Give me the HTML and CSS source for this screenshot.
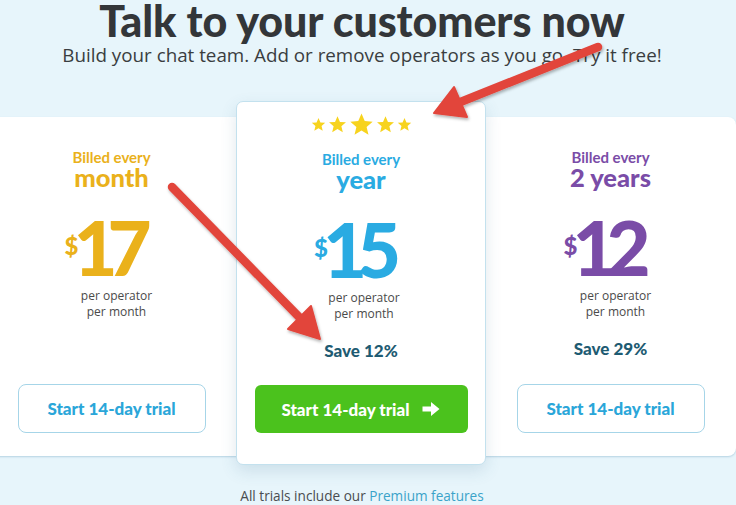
FILE: index.html
```html
<!DOCTYPE html>
<html lang="en">
<head>
    <meta charset="UTF-8">
    <meta name="viewport" content="width=device-width, initial-scale=1.0">
    <title>Pricing</title>
    <link rel="stylesheet" href="styles.css">
</head>
<body>
    <div class="page">
        <h1 class="title">Talk to your customers now</h1>
        <p class="subtitle">Build your chat team. Add or remove operators as you go. Try it free!</p>

        <div class="plans">
            <div class="plan plan-month">
                <div class="billed">Billed every</div>
                <div class="period">month</div>
                <div class="price"><span class="currency">$</span><span class="amount">17</span></div>
                <div class="per">per operator<br>per month</div>
                <button class="trial">Start 14-day trial</button>
            </div>

            <div class="plan plan-year">
                <div class="stars">
                    <svg class="star s1" viewBox="0 0 24 24"><path d="M12 1.5l3.1 7.2 7.6.6-5.8 5 1.8 7.5L12 17.8l-6.7 4 1.8-7.5-5.8-5 7.6-.6z"/></svg>
                    <svg class="star s2" viewBox="0 0 24 24"><path d="M12 1.5l3.1 7.2 7.6.6-5.8 5 1.8 7.5L12 17.8l-6.7 4 1.8-7.5-5.8-5 7.6-.6z"/></svg>
                    <svg class="star s3" viewBox="0 0 24 24"><path d="M12 1.5l3.1 7.2 7.6.6-5.8 5 1.8 7.5L12 17.8l-6.7 4 1.8-7.5-5.8-5 7.6-.6z"/></svg>
                    <svg class="star s2" viewBox="0 0 24 24"><path d="M12 1.5l3.1 7.2 7.6.6-5.8 5 1.8 7.5L12 17.8l-6.7 4 1.8-7.5-5.8-5 7.6-.6z"/></svg>
                    <svg class="star s1" viewBox="0 0 24 24"><path d="M12 1.5l3.1 7.2 7.6.6-5.8 5 1.8 7.5L12 17.8l-6.7 4 1.8-7.5-5.8-5 7.6-.6z"/></svg>
                </div>
                <div class="billed">Billed every</div>
                <div class="period">year</div>
                <div class="price"><span class="currency">$</span><span class="amount">15</span></div>
                <div class="per">per operator<br>per month</div>
                <div class="save">Save 12%</div>
                <button class="trial trial-main">Start 14-day trial
                    <svg class="arrow-icon" viewBox="0 0 20 16"><path d="M1.5 5.5h8.5V1l8.5 7-8.5 7v-4.5H1.5z"/></svg>
                </button>
            </div>

            <div class="plan plan-2years">
                <div class="billed">Billed every</div>
                <div class="period">2 years</div>
                <div class="price"><span class="currency">$</span><span class="amount">12</span></div>
                <div class="per">per operator<br>per month</div>
                <div class="save">Save 29%</div>
                <button class="trial">Start 14-day trial</button>
            </div>
        </div>

        <p class="note">All trials include our <a href="#">Premium features</a></p>

        <!-- annotation arrows drawn over the screenshot -->
        <svg class="arrows" viewBox="0 0 736 505" width="736" height="505">
            <defs>
                <filter id="sh" x="-20%" y="-20%" width="140%" height="140%">
                    <feDropShadow dx="1" dy="2" stdDeviation="1.5" flood-color="#000" flood-opacity="0.3"/>
                </filter>
            </defs>
            <g filter="url(#sh)" fill="#e2453b" stroke="#e2453b">
                <line x1="598" y1="47" x2="458" y2="103" stroke-width="8.5" stroke-linecap="round"/>
                <polygon points="434,113 454,87 467,117" stroke-width="2" stroke-linejoin="round"/>
                <line x1="172" y1="187" x2="301" y2="319" stroke-width="8.5" stroke-linecap="round"/>
                <polygon points="320,339 288,329 311,306" stroke-width="2" stroke-linejoin="round"/>
            </g>
        </svg>
    </div>
</body>
</html>
```

FILE: styles.css
```css
* {
    margin: 0;
    padding: 0;
    box-sizing: border-box;
}

body {
    background-color: #e7f5fb;
    font-family: "Open Sans", Arial, sans-serif;
    color: #3a3a3a;
    overflow: hidden;
}

.page {
    position: relative;
    width: 736px;
    height: 505px;
}

.title {
    padding-right: 12px;
    padding-top: 1px;
    font-family: Lato, "Open Sans", sans-serif;
    font-weight: 900;
    font-size: 43px;
    line-height: 40px;
    text-align: center;
    color: #333639;
    letter-spacing: -0.1px;
}

.subtitle {
    padding-right: 12px;
    margin-top: 2px;
    font-size: 18.8px;
    line-height: 24px;
    text-align: center;
    color: #3a3d40;
}

.plans {
    display: grid;
    grid-template-columns: 249px 250px 249px;
    margin-top: 50px;
    margin-left: -13px;
    height: 339px;
    background-color: #fff;
    border-radius: 0 8px 8px 0;
    box-shadow: 0 1px 2px rgba(90, 150, 180, 0.35);
}

.plan {
    display: flex;
    flex-direction: column;
    align-items: center;
    padding-top: 31px;
    padding-bottom: 23px;
}

.plan-year {
    margin-top: -16px;
    margin-bottom: -9px;
    padding-top: 11px;
    padding-bottom: 31px;
    background-color: #fff;
    border: 1px solid #c3e1ee;
    border-radius: 7px;
    box-shadow: 0 6px 16px rgba(60, 110, 140, 0.16);
    position: relative;
}

.stars {
    display: flex;
    align-items: center;
    gap: 2px;
    height: 22px;
    margin-bottom: 15px;
}

.star {
    fill: #f7d31e;
}
.s1 { width: 15px; height: 15px; }
.s2 { width: 19px; height: 19px; }
.s3 { width: 25px; height: 25px; }

.billed {
    font-family: Lato, sans-serif;
    font-weight: 700;
    font-size: 15px;
    line-height: 18px;
}

.period {
    margin-top: -1px;
    font-family: Lato, sans-serif;
    font-weight: 900;
    font-size: 25.5px;
    line-height: 24px;
}

.price {
    display: flex;
    align-items: center;
    margin-top: 26px;
    height: 64px;
    font-family: Lato, sans-serif;
    font-weight: 900;
}

.currency {
    font-size: 24px;
    margin-right: -5px;
    margin-top: -3px;
}

.amount {
    font-size: 76px;
    line-height: 64px;
    letter-spacing: -10px;
    margin-right: 17px;
}

.per {
    margin-top: 9px;
    margin-left: 10px;
    font-size: 12px;
    line-height: 16px;
    text-align: center;
    color: #4a4a4a;
}

.plan-year .per {
    margin-left: 6px;
}

.save {
    margin-top: 19px;
    font-family: Lato, sans-serif;
    font-weight: 900;
    font-size: 17px;
    line-height: 20px;
    color: #1e5b72;
}

.trial {
    margin-top: auto;
    width: 188px;
    height: 49px;
    border: 1px solid #a6d5e8;
    border-radius: 8px;
    background-color: #fff;
    color: #2aa6d9;
    font-family: Lato, sans-serif;
    font-weight: 900;
    font-size: 17px;
}

.trial-main {
    width: 213px;
    height: 48px;
    border: none;
    border-radius: 6px;
    background-color: #4bc21d;
    color: #fff;
    display: flex;
    align-items: center;
    justify-content: center;
    gap: 11px;
}

.arrow-icon {
    width: 20px;
    height: 16px;
    fill: #fff;
}

.plan-month { color: #eab11b; }
.plan-year { color: #2aabe2; }
.plan-2years { color: #7a4ca7; }

.note {
    padding-right: 12px;
    margin-top: 31px;
    text-align: center;
    font-size: 13.6px;
    line-height: 18px;
    color: #4a4d50;
}

.note a {
    color: #3aa3c9;
    text-decoration: none;
}

.arrows {
    position: absolute;
    top: 0;
    left: 0;
    pointer-events: none;
}
```
